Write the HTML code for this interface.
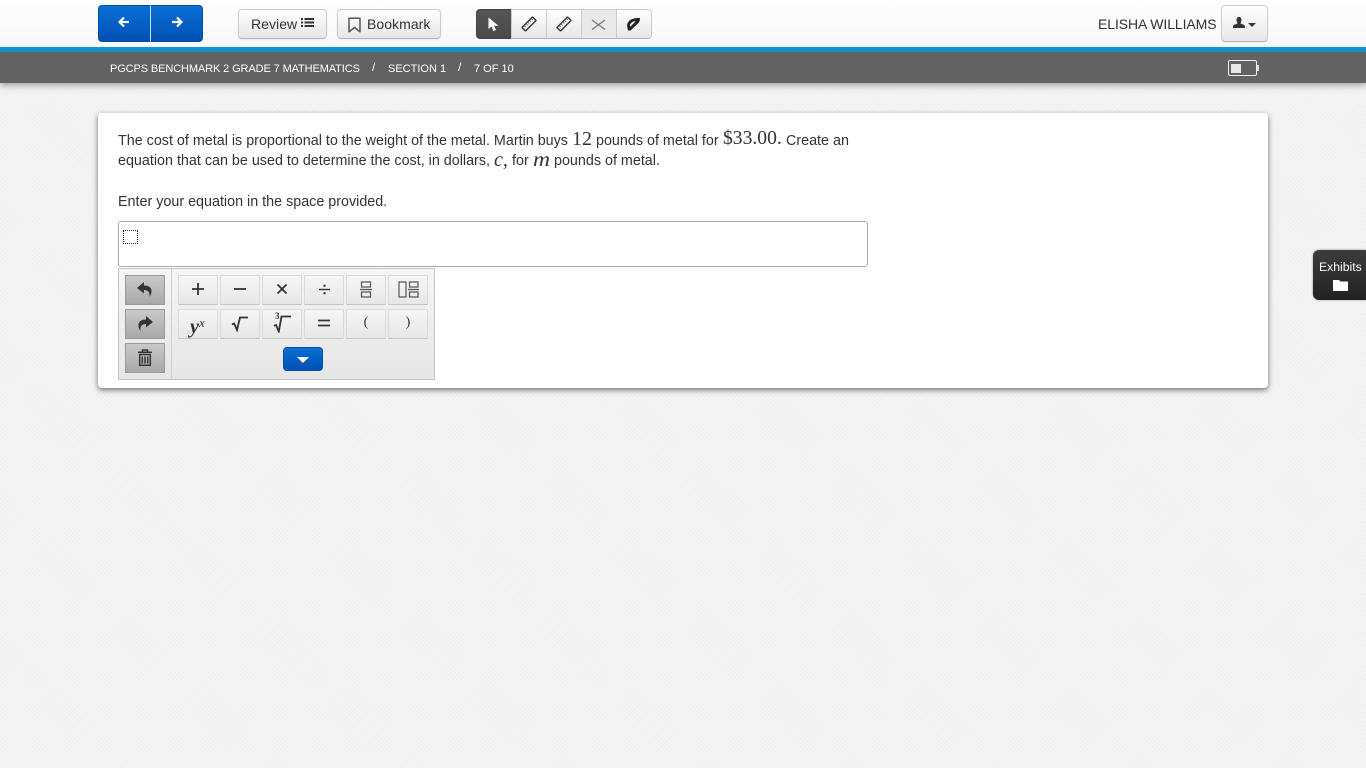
<!DOCTYPE html>
<html lang="en">
<head>
<meta charset="utf-8">
<title>Assessment</title>
<style>
html,body{margin:0;padding:0;width:1366px;height:768px;overflow:hidden}
body{font-family:"Liberation Sans",Arial,sans-serif;color:#333;position:relative;
background-color:#f2f2f2;
background-image:repeating-linear-gradient(45deg,rgba(255,255,255,.3) 0 1px,transparent 1px 3px),repeating-linear-gradient(-45deg,rgba(230,230,230,.25) 0 1px,transparent 1px 3px)}
*{box-sizing:border-box}
.a{position:absolute}
.top{left:0;top:0;width:1366px;height:47px;background:linear-gradient(#fff,#f8f8f8)}
.blue{left:0;top:47px;width:1366px;height:5px;background:#1295cd}
.bar{left:0;top:52px;width:1366px;height:31px;background:#626262;box-shadow:0 3px 6px rgba(0,0,0,.3);color:#fff;font-size:11px}
.bar span{position:absolute;top:10px;line-height:13px;white-space:nowrap}
.nav{top:5px;height:37px;background:linear-gradient(#0a6fd6,#0050b4);border:1px solid #0450a8}
.btn{background:linear-gradient(#fff,#e6e6e6);border:1px solid #ccc;border-bottom-color:#b3b3b3;border-radius:4px;box-shadow:inset 0 1px 0 rgba(255,255,255,.2),0 1px 2px rgba(0,0,0,.05);font-size:14px;color:#333;line-height:29px;white-space:nowrap;letter-spacing:.05px}
.tool{top:9px;height:30px;width:36px;background:linear-gradient(#fff,#e6e6e6);border:1px solid #ccc;border-bottom-color:#b3b3b3;margin:0}
.card{left:98px;top:113px;width:1170px;height:275px;background:#fff;border-radius:4px;box-shadow:0 2px 6px rgba(0,0,0,.55)}
.p{font-size:14.33px;line-height:20px;white-space:nowrap;color:#333}
.m{font-family:"Liberation Serif",serif;font-size:20px;line-height:20px;white-space:nowrap;color:#333}
.input{left:118px;top:221px;width:750px;height:46px;border:1px solid #aaa;border-radius:3px;background:#fff}
.pal{left:118px;top:268px;width:317px;height:112px;border:1px solid #c4c4c4;background:linear-gradient(#f5f5f5,#e6e6e6)}
.sep{left:171px;top:269px;width:1px;height:110px;background:#cfcfcf}
.k{width:40px;height:30px;background:linear-gradient(#f6f6f6,#e7e7e7);border:1px solid #dadada;border-bottom-color:#c4c4c4;border-radius:1px;display:flex;align-items:center;justify-content:center;color:#333;padding-bottom:2px}
.g{left:125px;width:40px;height:30px;background:linear-gradient(#c9c9c9,#a8a8a8);border:1px solid #9a9a9a;display:flex;align-items:center;justify-content:center;padding-bottom:2px}
svg{display:block}
</style>
</head>
<body>
<div class="a top"></div>
<div class="a blue"></div>
<div class="a bar">
<span style="left:110px;top:10px;letter-spacing:-.11px;margin-top:1px">PGCPS BENCHMARK 2 GRADE 7 MATHEMATICS</span>
<span style="left:372px;font-size:12px;top:9px">/</span>
<span style="left:388px;margin-top:1px">SECTION 1</span>
<span style="left:458px;font-size:12px;top:9px">/</span>
<span style="left:474px;margin-top:1px">7 OF 10</span>
</div>
<div class="a" style="left:1228px;top:60px;width:29px;height:16px;border:1px solid #eee;border-radius:2px"></div>
<div class="a" style="left:1231px;top:64px;width:10px;height:9px;background:#e8e8e8"></div>
<div class="a" style="left:1257px;top:65px;width:2px;height:6px;background:#ddd"></div>

<div class="a nav" style="left:98px;width:53px;border-radius:4px 0 0 4px;border-right:1px solid #cfe0f5"></div>
<div class="a nav" style="left:151px;width:52px;border-radius:0 4px 4px 0;border-left:0"></div>
<svg class="a" style="left:118px;top:16px" width="12" height="12" viewBox="0 0 12 12"><path d="M6 1.500 1.500 6 6 10.500M2 6H11" fill="none" stroke="#fff" stroke-width="2.200"/></svg>
<svg class="a" style="left:171px;top:16px" width="12" height="12" viewBox="0 0 12 12"><path d="M6 1.500 10.500 6 6 10.500M10 6H1" fill="none" stroke="#fff" stroke-width="2.200"/></svg>

<div class="a btn" style="left:238px;top:9px;width:89px;height:30px;padding-left:12px">Review</div>
<svg class="a" style="left:301px;top:17px" width="13" height="11" viewBox="0 0 13 11"><path d="M0 1h2v2H0zM0 4.500h2v2H0zM0 8h2v2H0zM3.500 1H13v2H3.500zM3.500 4.500H13v2H3.500zM3.500 8H13v2H3.500z" fill="#333"/></svg>
<div class="a btn" style="left:337px;top:9px;width:104px;height:30px;padding-left:29px">Bookmark</div>
<svg class="a" style="left:347px;top:17px" width="15" height="16" viewBox="0 0 15 16"><path d="M2 1.200H13V14.800L7.500 10.500 2 14.800Z" fill="none" stroke="#555" stroke-width="1.500" stroke-linejoin="round"/></svg>

<div class="a tool" style="left:476px;background:linear-gradient(#555,#4a4a4a);border-color:#444;border-radius:4px 0 0 4px"></div>
<svg class="a" style="left:487px;top:17px" width="13" height="15" viewBox="0 0 13 15"><path d="M1.500 0.500V12L4.500 9.500 6.500 14 9 13 7 8.700H11.500Z" fill="#fff"/></svg>
<div class="a tool" style="left:511px"></div>
<div class="a tool" style="left:546px"></div>
<div class="a tool" style="left:581px;background:#e9e9e9"></div>
<div class="a tool" style="left:616px;border-radius:0 4px 4px 0"></div>
<svg class="a" style="left:521px;top:16px" width="16" height="16" viewBox="0 0 16 16"><g transform="rotate(-45 8 8)"><rect x=".5" y="5.500" width="15" height="5" rx=".6" fill="none" stroke="#333" stroke-width="1.400"/><path d="M3.500 5.500v2.500M6 5.500v2.500M8.500 5.500v2.500M11 5.500v2.500M13.500 5.500v2.500" stroke="#555" stroke-width=".8"/></g></svg>
<svg class="a" style="left:556px;top:16px" width="16" height="16" viewBox="0 0 16 16"><g transform="rotate(-45 8 8)"><rect x=".5" y="5.500" width="15" height="5" rx=".6" fill="none" stroke="#333" stroke-width="1.400"/><path d="M3.500 5.500v2.500M6 5.500v2.500M8.500 5.500v2.500M11 5.500v2.500M13.500 5.500v2.500" stroke="#555" stroke-width=".8"/></g></svg>
<svg class="a" style="left:591px;top:18px" width="15" height="13" viewBox="0 0 15 13"><path d="M1 2 14 11.500M14 2 1 11.500" stroke="#777" stroke-width="1.300" fill="none"/></svg>
<svg class="a" style="left:626px;top:17px" width="15" height="14" viewBox="0 0 15 14"><path d="M2 13.500 1 8.500C1.500 3.500 6 .5 14 1 14 3 13.500 4.500 12.500 6L4.500 13.500ZM3.800 8.500 4.200 9.800 9.800 4.300C7 4 4.800 5.800 3.800 8.500Z" fill="#222" fill-rule="evenodd"/></svg>

<div class="a" style="left:1098px;top:15px;font-size:14px;line-height:18px;white-space:nowrap;letter-spacing:-.09px">ELISHA WILLIAMS</div>
<div class="a btn" style="left:1221px;top:5px;width:47px;height:37px"></div>
<svg class="a" style="left:1233px;top:17px" width="12" height="12" viewBox="0 0 12 12"><path d="M3.500 3C3.500 1 4.500 0 6 0S8.500 1 8.500 3C8.500 4.500 7.800 5.500 7.500 6.200 8.500 7.200 12 7.500 12 9.500V11H0V9.500C0 7.500 3.500 7.200 4.500 6.200 4.200 5.500 3.500 4.500 3.500 3Z" fill="#333"/></svg>
<div class="a" style="left:1248px;top:23px;width:0;height:0;border:4px solid transparent;border-top-color:#333;border-bottom:0"></div>

<div class="a card"></div>
<div class="a p" style="left:118px;top:131px">The cost of metal is proportional to the weight of the metal. Martin buys</div>
<div class="a m" style="left:572px;top:129px">12</div>
<div class="a p" style="left:596px;top:131px">pounds of metal for</div>
<div class="a m" style="left:723px;top:129px;font-size:19.6px">$33.00.</div>
<div class="a p" style="left:786px;top:131px">Create an</div>
<div class="a p" style="left:118px;top:151px">equation that can be used to determine the cost, in dollars,</div>
<div class="a m" style="left:494px;top:150px;font-style:italic">c,</div>
<div class="a p" style="left:512px;top:151px">for</div>
<div class="a m" style="left:533px;top:150px;font-style:italic;transform:scaleX(1.18);transform-origin:left">m</div>
<div class="a p" style="left:554px;top:151px">pounds of metal.</div>
<div class="a p" style="left:118px;top:192px">Enter your equation in the space provided.</div>
<div class="a input"></div>
<div class="a" style="left:123px;top:230px;width:15px;height:14px;border:1px dotted #222"></div>

<div class="a pal"></div>
<div class="a sep"></div>
<div class="a g" style="top:275px"><svg width="18" height="17" viewBox="0 0 18 17"><path d="M8 1 1 7 8 12.500V9C12 9 14 11 13.500 16 17 11 16.500 4.500 8 4.500Z" fill="#333"/></svg></div>
<div class="a g" style="top:309px"><svg width="18" height="17" viewBox="0 0 18 17"><path d="M10 1 17 7 10 12.500V9C6 9 4 11 4.500 16 1 11 1.500 4.500 10 4.500Z" fill="#333"/></svg></div>
<div class="a g" style="top:343px"><svg width="14" height="17" viewBox="0 0 14 17"><path d="M0 3.200h14M4.500 3V1h5v2M1.700 5.500h10.600V16.200H1.700zM4.300 7.500v7M7 7.500v7M9.700 7.500v7" fill="none" stroke="#333" stroke-width="1.500"/></svg></div>

<div class="a k" style="left:178px;top:275px"><svg width="12" height="12" viewBox="0 0 12 12"><path d="M6 0V12M0 6H12" stroke="#333" stroke-width="1.800"/></svg></div>
<div class="a k" style="left:220px;top:275px"><svg width="12" height="12" viewBox="0 0 12 12"><path d="M0 6H12" stroke="#333" stroke-width="1.800"/></svg></div>
<div class="a k" style="left:262px;top:275px"><svg width="12" height="12" viewBox="0 0 12 12"><path d="M1.500 1.500 10.500 10.500M10.500 1.500 1.500 10.500" stroke="#333" stroke-width="1.800"/></svg></div>
<div class="a k" style="left:304px;top:275px"><svg width="11" height="11" viewBox="0 0 11 11"><path d="M0 5.500H11" stroke="#333" stroke-width="1.400"/><circle cx="5.500" cy="1.800" r="1.200" fill="#333"/><circle cx="5.500" cy="9.200" r="1.200" fill="#333"/></svg></div>
<div class="a k" style="left:346px;top:275px"><svg width="12" height="17" viewBox="0 0 12 17"><path d="M1.500 1h9v5h-9zM1.500 11h9v5h-9zM0 8.500H12" fill="none" stroke="#555" stroke-width="1.200"/></svg></div>
<div class="a k" style="left:388px;top:275px"><svg width="21" height="17" viewBox="0 0 21 17"><path d="M1 1h7v15H1zM11.500 1H20v5h-8.500zM11.500 11H20v5h-8.500zM10 8.500H21" fill="none" stroke="#555" stroke-width="1.200"/></svg></div>

<div class="a k" style="left:178px;top:309px"></div>
<div class="a m" style="left:190px;top:317px;font-size:20px;font-style:italic;font-weight:bold">y</div>
<div class="a m" style="left:199px;top:313px;font-size:13px;font-style:italic">x</div>
<div class="a k" style="left:220px;top:309px"><svg width="18" height="17" viewBox="0 0 18 17"><path d="M1 9.500 3.200 8.500 6 15 9 2.500H17" fill="none" stroke="#333" stroke-width="1.800"/></svg></div>
<div class="a k" style="left:262px;top:309px"></div>
<svg class="a" style="left:273px;top:315px" width="19" height="18" viewBox="0 0 19 18"><path d="M1 11 3 10 5.800 16.500 8.500 1.500H18" fill="none" stroke="#333" stroke-width="1.800"/></svg>
<div class="a m" style="left:275px;top:310px;font-size:9px;line-height:12px;font-weight:bold">3</div>
<div class="a k" style="left:304px;top:309px"><svg width="12" height="10" viewBox="0 0 12 10"><path d="M0 2.500H12M0 7.500H12" stroke="#333" stroke-width="1.800"/></svg></div>
<div class="a k m" style="left:346px;top:309px;font-size:14px">(</div>
<div class="a k m" style="left:388px;top:309px;font-size:14px">)</div>

<div class="a" style="left:283px;top:347px;width:40px;height:24px;border-radius:4px;background:linear-gradient(#0a6fd6,#0050b4);border:1px solid #0450a8"></div>
<div class="a" style="left:297px;top:357px;width:0;height:0;border:6px solid transparent;border-top-color:#fff;border-bottom:0"></div>

<div class="a" style="left:1313px;top:250px;width:53px;height:50px;background:linear-gradient(#3c3c3c,#222);border-radius:6px 0 0 6px;box-shadow:0 0 2px rgba(0,0,0,.4)"></div>
<div class="a" style="left:1319px;top:260px;font-size:12.2px;line-height:14px;color:#fff;white-space:nowrap">Exhibits</div>
<svg class="a" style="left:1333px;top:279px" width="15" height="13" viewBox="0 0 15 13"><path d="M0 1H6L7.500 2.500H15V12H0Z" fill="#fff"/></svg>
</body>
</html>
